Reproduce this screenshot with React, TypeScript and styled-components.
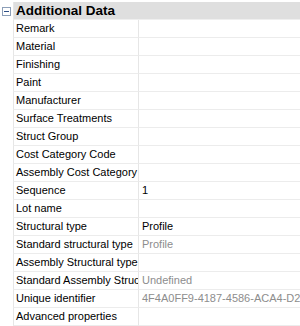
import React from "react";
import styled, { createGlobalStyle } from "styled-components";

interface Property {
  name: string;
  value?: string;
  readOnly?: boolean;
}

const properties: Property[] = [
  { name: "Remark" },
  { name: "Material" },
  { name: "Finishing" },
  { name: "Paint" },
  { name: "Manufacturer" },
  { name: "Surface Treatments" },
  { name: "Struct Group" },
  { name: "Cost Category Code" },
  { name: "Assembly Cost Category" },
  { name: "Sequence", value: "1" },
  { name: "Lot name" },
  { name: "Structural type", value: "Profile" },
  { name: "Standard structural type", value: "Profile", readOnly: true },
  { name: "Assembly Structural type" },
  { name: "Standard Assembly Structural type", value: "Undefined", readOnly: true },
  { name: "Unique identifier", value: "4F4A0FF9-4187-4586-ACA4-D26B1E0C77A2", readOnly: true },
  { name: "Advanced properties" },
];

const PropertyGrid = () => {
  const [open, setOpen] = React.useState(true);

  return (
    <Grid>
      <CategoryRow>
        <Gutter>
          <Toggle onClick={() => setOpen(!open)}>
            <svg width="9" height="9" viewBox="0 0 9 9">
              <rect x="0.5" y="0.5" width="8" height="8" fill="#fff" stroke="#8c9fb8" />
              <path d="M2 4.5h5" stroke="#2d4f86" />
              {!open && <path d="M4.5 2v5" stroke="#2d4f86" />}
            </svg>
          </Toggle>
        </Gutter>
        <CategoryTitle>Additional Data</CategoryTitle>
      </CategoryRow>
      {open &&
        properties.map((p) => (
          <Row key={p.name}>
            <Gutter />
            <NameCell>{p.name}</NameCell>
            <ValueCell $readOnly={p.readOnly}>{p.value}</ValueCell>
          </Row>
        ))}
    </Grid>
  );
};

const GlobalStyle = createGlobalStyle`
  body {
    margin: 0;
    background: #ffffff;
    font-family: Tahoma, "Liberation Sans", Arial, sans-serif;
    font-size: 11px;
    color: #000;
  }
`;

const Grid = styled.div`
  width: 300px;
  height: 326px;
  overflow: hidden;
  padding-top: 2px;
  box-sizing: border-box;
  display: flex;
  flex-direction: column;
`;

const Gutter = styled.div`
  width: 13px;
  flex: none;
  display: flex;
  align-items: center;
  justify-content: center;
  background: #ffffff;
`;

const Toggle = styled.div`
  display: flex;
  margin-left: -1px;
  cursor: pointer;
`;

const CategoryRow = styled.div`
  display: flex;
  height: 18px;
  flex: none;
`;

const CategoryTitle = styled.div`
  flex: 1;
  background: #dfdfdf;
  border-left: 1px solid #e6e6e6;
  border-bottom: 1px solid #efefef;
  font-weight: bold;
  font-size: 13.5px;
  line-height: 17px;
  padding-left: 2px;
  white-space: nowrap;
`;

const Row = styled.div`
  display: flex;
  height: 18px;
  flex: none;
`;

const NameCell = styled.div`
  width: 121px;
  flex: none;
  border-left: 1px solid #e6e6e6;
  border-right: 1px solid #e6e6e6;
  border-bottom: 1px solid #ececec;
  padding-left: 2px;
  padding-right: 1px;
  line-height: 17px;
  white-space: nowrap;
  overflow: hidden;
`;

const ValueCell = styled.div<{ $readOnly?: boolean }>`
  flex: 1;
  min-width: 0;
  border-bottom: 1px solid #ececec;
  padding-left: 3px;
  line-height: 17px;
  white-space: nowrap;
  overflow: hidden;
  color: ${(p) => (p.$readOnly ? "#8d8d8d" : "#000")};
`;

const App = () => (
  <>
    <GlobalStyle />
    <PropertyGrid />
  </>
);

export default App;
